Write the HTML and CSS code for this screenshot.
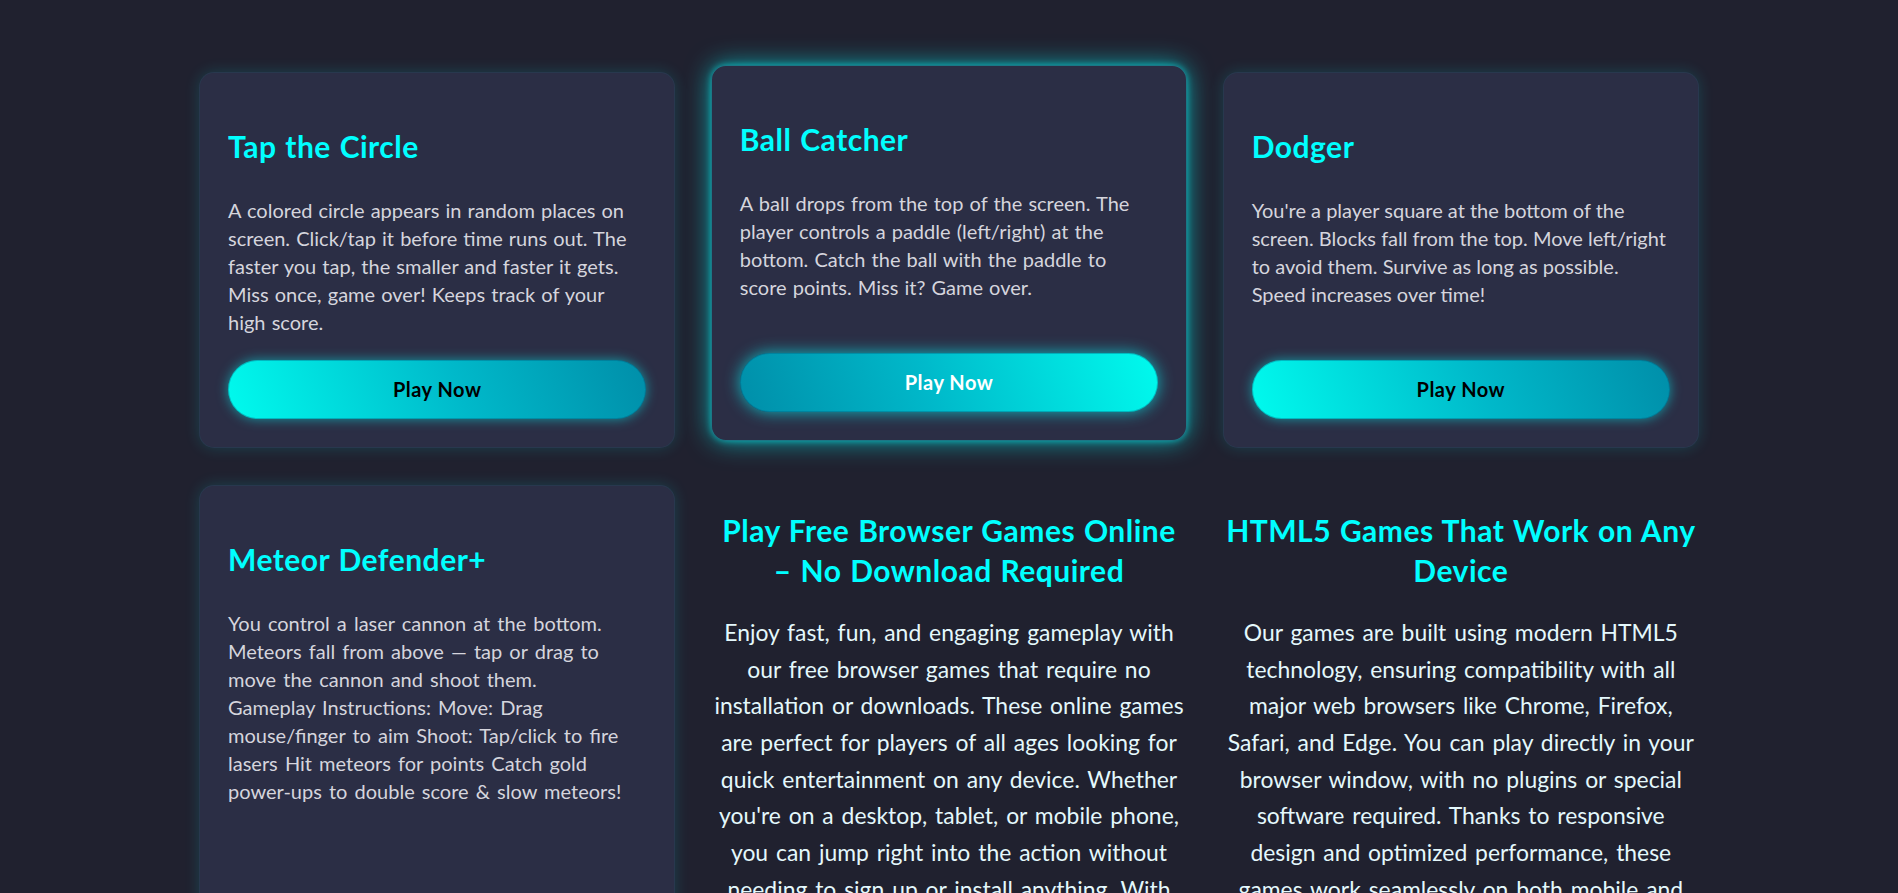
FILE: index.html
```html
<!DOCTYPE html>
<html lang="en">
<head>
<meta charset="utf-8">
<title>Free Browser Games</title>
<link rel="stylesheet" href="styles.css">
</head>
<body>
<main class="games-grid">
  <article class="game-card">
    <h3 class="game-title">Tap the Circle</h3>
    <p class="game-desc">A colored circle appears in random places on screen. Click/tap it before time runs out. The faster you tap, the smaller and faster it gets. Miss once, game over! Keeps track of your high score.</p>
    <a class="play-btn" href="#">Play Now</a>
  </article>
  <article class="game-card is-hover">
    <h3 class="game-title">Ball Catcher</h3>
    <p class="game-desc">A ball drops from the top of the screen. The player controls a paddle (left/right) at the bottom. Catch the ball with the paddle to score points. Miss it? Game over.</p>
    <a class="play-btn" href="#">Play Now</a>
  </article>
  <article class="game-card">
    <h3 class="game-title">Dodger</h3>
    <p class="game-desc game-desc--snug">You're a player square at the bottom of the screen. Blocks fall from the top. Move left/right to avoid them. Survive as long as possible. Speed increases over time!</p>
    <a class="play-btn" href="#">Play Now</a>
  </article>
  <article class="game-card">
    <h3 class="game-title">Meteor Defender+</h3>
    <p class="game-desc game-desc--loose">You control a laser cannon at the bottom. Meteors fall from above — tap or drag to move the cannon and shoot them.<br>Gameplay Instructions: Move: Drag mouse/finger to aim Shoot: Tap/click to fire lasers Hit meteors for points Catch gold power-ups to double score &amp; slow meteors!</p>
    <a class="play-btn" href="#">Play Now</a>
  </article>
  <section class="info-block">
    <h2 class="info-title">Play Free Browser Games Online – No Download Required</h2>
    <p class="info-text">Enjoy fast, fun, and engaging gameplay with our free browser games that require no installation or downloads. These online games are perfect for players of all ages looking for quick entertainment on any device. Whether you're on a desktop, tablet, or mobile phone, you can jump right into the action without needing to sign up or install anything. With simple controls, quick rounds and instant loading, every game is ready to play the moment you click, so you can take a short break or chase a new high score whenever you like.</p>
  </section>
  <section class="info-block">
    <h2 class="info-title">HTML5 Games That Work on Any Device</h2>
    <p class="info-text">Our games are built using modern HTML5 technology, ensuring compatibility with all major web browsers like Chrome, Firefox, Safari, and Edge. You can play directly in your browser window, with no plugins or special software required. Thanks to responsive design and optimized performance, these games work seamlessly on both mobile and desktop devices, so you can enjoy smooth, lag-free gameplay anywhere, on any screen size, at home or on the go.</p>
  </section>
</main>
</body>
</html>
```
FILE: styles.css
```css
* { box-sizing: border-box; }

html, body {
  margin: 0;
  padding: 0;
}

body {
  background: #20212f;
  font-family: "Segoe UI", Lato, Roboto, sans-serif;
  color: #d4d4dc;
  min-height: 100vh;
}

.games-grid {
  width: 1500px;
  margin: 0 auto;
  padding: 72px 0 60px;
  display: grid;
  grid-template-columns: repeat(3, 1fr);
  gap: 37px 35.5px;
}

.game-card {
  background: #2b2e45;
  border-radius: 15px;
  padding: 29px;
  display: flex;
  flex-direction: column;
  box-shadow: 0 0 15px rgba(0, 255, 255, 0.15), inset 0 0 0 1px rgba(0, 255, 255, 0.05);
}

.game-card.is-hover {
  transform: translateY(-7px);
  box-shadow: 0 0 26px rgba(0, 255, 255, 0.6), 0 0 6px rgba(0, 255, 255, 0.5), inset 0 0 0 1px rgba(0, 255, 255, 0.35);
}

.game-title {
  margin: 25px 0 0;
  font-size: 30px;
  line-height: 40px;
  font-weight: 700;
  letter-spacing: 0.5px;
  word-spacing: 1px;
  color: #00ffff;
}

.game-desc {
  margin: 30px 0 24px;
  font-size: 20px;
  line-height: 28px;
  word-spacing: 1px;
  color: #d5d5dd;
}

.game-desc--snug {
  word-spacing: 0;
}

.game-desc--loose {
  word-spacing: 2px;
}

.play-btn {
  margin-top: auto;
  display: block;
  height: 59px;
  line-height: 59px;
  border-radius: 30px;
  text-align: center;
  text-decoration: none;
  font-size: 20px;
  font-weight: 700;
  letter-spacing: 0.5px;
  color: #000;
  background: linear-gradient(70deg, #00fbee 0%, #00b9ca 55%, #008ea9 100%);
  box-shadow: 0 0 12px rgba(0, 255, 255, 0.5), inset 0 0 0 1px rgba(0, 90, 120, 0.35);
}

.game-card.is-hover .play-btn {
  color: #fff;
  background: linear-gradient(70deg, #008ea9 0%, #00b9ca 45%, #00fbee 100%);
  box-shadow: 0 0 16px rgba(0, 255, 255, 0.65), inset 0 0 0 1px rgba(0, 90, 120, 0.35);
}

.info-block {
  text-align: center;
}

.info-title {
  margin: 25px 0 0;
  font-size: 30px;
  line-height: 40px;
  font-weight: 700;
  letter-spacing: 0.5px;
  word-spacing: 1px;
  color: #00ffff;
}

.info-text {
  margin: 24px 0 0;
  font-size: 22.9px;
  line-height: 36.67px;
  word-spacing: 2px;
  color: #e4f8fc;
}
```
